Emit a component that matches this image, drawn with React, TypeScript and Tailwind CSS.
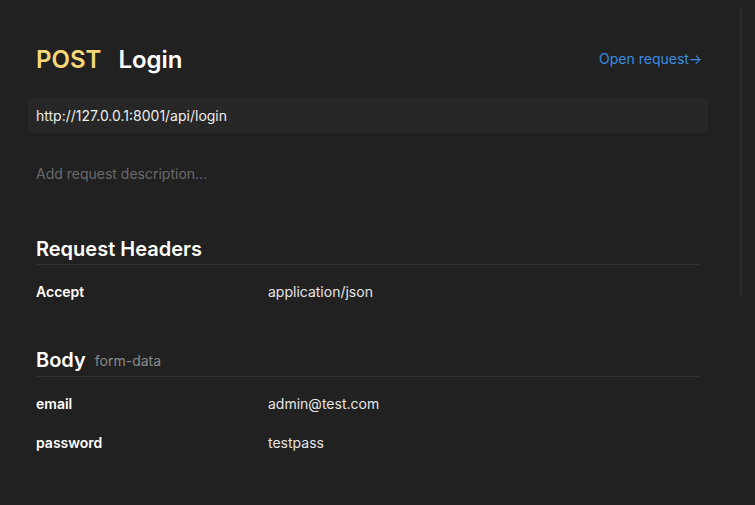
export default function App() {
  const headers = [{ key: 'Accept', value: 'application/json' }];
  const body = [
    { key: 'email', value: 'admin@test.com' },
    { key: 'password', value: 'testpass' },
  ];

  return (
    <div
      className="relative h-[505px] w-[755px] overflow-hidden bg-[#212121] text-[#ececec]"
      style={{ fontFamily: 'Inter, "Noto Sans", sans-serif' }}
    >
      <div className="w-[700px] pl-[36px] pt-[43px]">
        <div className="flex items-center justify-between">
          <h1 className="flex items-center gap-[17px] text-[24px] font-semibold leading-[34px]">
            <span className="text-[#f6d878]">POST</span>
            <span className="text-white">Login</span>
          </h1>
          <a className="-mr-[2px] mb-[2px] text-[14px] leading-[20px] text-[#3b8de0]">Open request→</a>
        </div>

        <div className="-mx-[8px] mt-[21px] flex h-[35px] items-center rounded-[4px] bg-[#272727] px-[8px] text-[14px] text-[#ededed]">
          http://127.0.0.1:8001/api/login
        </div>

        <p className="mt-[30px] text-[14px] leading-[22px] text-[#6a6a6a]">Add request description...</p>

        <section className="mt-[52px]">
          <h2 className="border-b border-[#303030] pb-[3px] text-[20px] font-semibold leading-[24px] text-white">
            Request Headers
          </h2>
          <div className="mt-[15px]">
            {headers.map((h) => (
              <div key={h.key} className="flex h-[22px] items-center text-[14px]">
                <span className="w-[232px] font-semibold text-white">{h.key}</span>
                <span className="text-[#e6e6e6]">{h.value}</span>
              </div>
            ))}
          </div>
        </section>

        <section className="mt-[46px]">
          <h2 className="flex h-[29px] items-end gap-[9px] border-b border-[#303030] pb-[4px]">
            <span className="text-[20px] font-semibold leading-[24px] text-white">Body</span>
            <span className="pb-[1px] text-[14px] leading-[20px] text-[#8a8a8a]">form-data</span>
          </h2>
          <div className="mt-[15px] flex flex-col gap-[17px]">
            {body.map((b) => (
              <div key={b.key} className="flex h-[22px] items-center text-[14px]">
                <span className="w-[232px] font-semibold text-white">{b.key}</span>
                <span className="text-[#e6e6e6]">{b.value}</span>
              </div>
            ))}
          </div>
        </section>
      </div>

      <div className="absolute left-[740px] top-[8px] h-[288px] w-[2px] rounded-full bg-[#2c2c2c]" />
    </div>
  );
}
